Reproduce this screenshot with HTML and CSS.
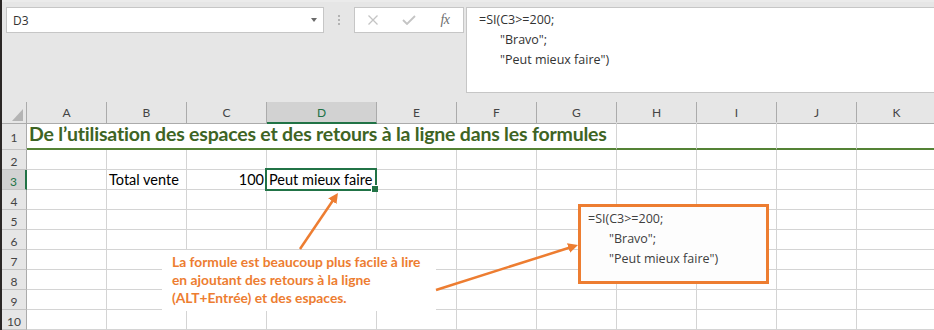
FILE: index.html
```html
<!DOCTYPE html>
<html lang="fr">

<head>
  <meta charset="UTF-8" />
  <meta name="viewport" content="width=device-width, initial-scale=1.0" />
  <title>Espaces et retours à la ligne</title>
  <link rel="stylesheet" href="styles.css">
</head>

<body>
  <div class="app">
    <div class="toolbar">
      <div class="namebox">
        <span>D3</span>
        <span class="caret"></span>
      </div>
      <div class="grip"><i></i><i></i><i></i></div>
      <div class="buttons">
        <span class="btn">
          <svg width="12" height="10" viewBox="0 0 12 10"><path d="M1.5 0.5 L10.5 9.5 M10.5 0.5 L1.5 9.5" stroke="#c4c4c4" stroke-width="1.3" fill="none" /></svg>
        </span>
        <span class="btn">
          <svg width="14" height="10" viewBox="0 0 14 10"><path d="M1 5 L5 9 L13 1" stroke="#c4c4c4" stroke-width="1.8" fill="none" /></svg>
        </span>
        <span class="btn fx">fx</span>
      </div>
      <div class="formula">
        <div>=SI(C3&gt;=200;</div>
        <div class="indent">"Bravo";</div>
        <div class="indent">"Peut mieux faire")</div>
      </div>
    </div>

    <div class="sheet">
      <div class="row head">
        <div class="corner"></div>
        <div class="col">A</div>
        <div class="col">B</div>
        <div class="col">C</div>
        <div class="col sel">D</div>
        <div class="col">E</div>
        <div class="col">F</div>
        <div class="col">G</div>
        <div class="col">H</div>
        <div class="col">I</div>
        <div class="col">J</div>
        <div class="col">K</div>
      </div>
      <div class="row r1">
        <div class="num">1</div>
        <div class="cell title">De l’utilisation des espaces et des retours à la ligne dans les formules</div>
        <div class="cell"></div>
        <div class="cell"></div>
        <div class="cell"></div>
        <div class="cell"></div>
      </div>
      <div class="row">
        <div class="num">2</div>
        <div class="cell"></div><div class="cell"></div><div class="cell"></div><div class="cell"></div>
        <div class="cell"></div><div class="cell"></div><div class="cell"></div><div class="cell"></div>
        <div class="cell"></div><div class="cell"></div><div class="cell"></div>
      </div>
      <div class="row">
        <div class="num sel">3</div>
        <div class="cell"></div>
        <div class="cell">Total vente</div>
        <div class="cell right">100</div>
        <div class="cell active">Peut mieux faire</div>
        <div class="cell"></div><div class="cell"></div><div class="cell"></div><div class="cell"></div>
        <div class="cell"></div><div class="cell"></div><div class="cell"></div>
      </div>
      <div class="row">
        <div class="num">4</div>
        <div class="cell"></div><div class="cell"></div><div class="cell"></div><div class="cell"></div>
        <div class="cell"></div><div class="cell"></div><div class="cell"></div><div class="cell"></div>
        <div class="cell"></div><div class="cell"></div><div class="cell"></div>
      </div>
      <div class="row">
        <div class="num">5</div>
        <div class="cell"></div><div class="cell"></div><div class="cell"></div><div class="cell"></div>
        <div class="cell"></div><div class="cell"></div><div class="cell"></div><div class="cell"></div>
        <div class="cell"></div><div class="cell"></div><div class="cell"></div>
      </div>
      <div class="row">
        <div class="num">6</div>
        <div class="cell"></div><div class="cell"></div><div class="cell"></div><div class="cell"></div>
        <div class="cell"></div><div class="cell"></div><div class="cell"></div><div class="cell"></div>
        <div class="cell"></div><div class="cell"></div><div class="cell"></div>
      </div>
      <div class="row">
        <div class="num">7</div>
        <div class="cell"></div><div class="cell"></div><div class="cell"></div><div class="cell"></div>
        <div class="cell"></div><div class="cell"></div><div class="cell"></div><div class="cell"></div>
        <div class="cell"></div><div class="cell"></div><div class="cell"></div>
      </div>
      <div class="row">
        <div class="num">8</div>
        <div class="cell"></div><div class="cell"></div><div class="cell"></div><div class="cell"></div>
        <div class="cell"></div><div class="cell"></div><div class="cell"></div><div class="cell"></div>
        <div class="cell"></div><div class="cell"></div><div class="cell"></div>
      </div>
      <div class="row">
        <div class="num">9</div>
        <div class="cell"></div><div class="cell"></div><div class="cell"></div><div class="cell"></div>
        <div class="cell"></div><div class="cell"></div><div class="cell"></div><div class="cell"></div>
        <div class="cell"></div><div class="cell"></div><div class="cell"></div>
      </div>
      <div class="row">
        <div class="num">10</div>
        <div class="cell"></div><div class="cell"></div><div class="cell"></div><div class="cell"></div>
        <div class="cell"></div><div class="cell"></div><div class="cell"></div><div class="cell"></div>
        <div class="cell"></div><div class="cell"></div><div class="cell"></div>
      </div>
    </div>

    <!-- annotations over the sheet -->
    <div class="note">
      La formule est beaucoup plus facile à lire<br>
      en ajoutant des retours à la ligne<br>
      (ALT+Entrée) et des espaces.
    </div>
    <div class="callout">
      <div>=SI(C3&gt;=200;</div>
      <div class="indent">"Bravo";</div>
      <div class="indent">"Peut mieux faire")</div>
    </div>
    <svg class="arrows" width="934" height="330" viewBox="0 0 934 330">
      <defs>
        <marker id="head" markerUnits="userSpaceOnUse" markerWidth="11" markerHeight="10" refX="4" refY="5" orient="auto">
          <path d="M0 0 L10 5 L0 10 z" fill="#ed7d31" />
        </marker>
      </defs>
      <line x1="300" y1="249" x2="334.6" y2="198" stroke="#ed7d31" stroke-width="2.5" marker-end="url(#head)" />
      <line x1="436" y1="290" x2="572.3" y2="246.8" stroke="#ed7d31" stroke-width="2.5" marker-end="url(#head)" />
    </svg>
  </div>
</body>

</html>
```

FILE: styles.css
```css
* {
  padding: 0;
  margin: 0;
  box-sizing: border-box;
}

body {
  width: 934px;
  height: 330px;
  overflow: hidden;
  background: #fff;
  font-family: Lato, "Liberation Sans", sans-serif;
}

.app {
  position: relative;
  width: 934px;
  height: 330px;
  overflow: hidden;
  border-left: 2px solid #2b2726;
}

/* formula bar */
.toolbar {
  display: flex;
  align-items: flex-start;
  height: 102px;
  padding: 7px 0 0 4px;
  background: linear-gradient(#ebebeb 0 2px, #e6e6e6 2px);
  font-family: "Open Sans", "Liberation Sans", sans-serif;
  font-size: 12px;
  color: #333;
}

.namebox {
  display: flex;
  align-items: center;
  justify-content: space-between;
  width: 318px;
  height: 26px;
  padding: 0 6px;
  background: #fff;
  border: 1px solid #c6c6c6;
}

.caret {
  width: 0;
  height: 0;
  border-left: 3.5px solid transparent;
  border-right: 3.5px solid transparent;
  border-top: 4px solid #6a6a6a;
}

.grip {
  display: flex;
  flex-direction: column;
  align-items: center;
  justify-content: center;
  gap: 2px;
  width: 30px;
  height: 26px;
}

.grip i {
  width: 2px;
  height: 2px;
  background: #b3b3b3;
}

.buttons {
  display: flex;
  align-items: center;
  width: 110px;
  height: 26px;
  background: #fff;
  border: 1px solid #c6c6c6;
}

.btn {
  display: flex;
  align-items: center;
  justify-content: center;
  width: 36px;
  height: 24px;
}

.btn.fx {
  font-family: "Liberation Serif", serif;
  font-style: italic;
  font-size: 14px;
  color: #6e6e6e;
  letter-spacing: -0.5px;
}

.formula {
  flex: 1;
  height: 86px;
  margin: 0 -20px 0 2px;
  padding: 2px 0 0 12px;
  background: #fff;
  border: 1px solid #c6c6c6;
  font-size: 12.5px;
  line-height: 20px;
  white-space: nowrap;
}

.indent {
  padding-left: 21px;
}

/* grid */
.row {
  display: grid;
  grid-template-columns: 25px 80px 80px 80px 110px repeat(7, 80px);
  height: 20px;
}

.row > div {
  border-right: 1px solid #d4d4d4;
  border-bottom: 1px solid #d4d4d4;
}

.row .col,
.row .corner {
  background: #e6e6e6;
  border-right-color: #ababab;
  border-bottom-color: #ababab;
  text-align: center;
  font-size: 12px;
  line-height: 18px;
  padding-top: 2px;
  color: #444;
}

.corner {
  position: relative;
}

.corner::after {
  content: "";
  position: absolute;
  right: 3px;
  bottom: 2px;
  width: 0;
  height: 0;
  border-left: 11px solid transparent;
  border-bottom: 12px solid #b4b4b4;
}

.row .col.sel {
  background: #d2d2d2;
  border-bottom: 2px solid #217346;
  color: #217346;
}

.row .num {
  display: flex;
  align-items: center;
  justify-content: center;
  padding-top: 3px;
  background: #e6e6e6;
  border-right-color: #ababab;
  border-bottom-color: #c4c4c4;
  font-size: 12px;
  color: #444;
}

.row .num.sel {
  background: #d2d2d2;
  border-right: 2px solid #217346;
  color: #217346;
}

.cell {
  padding: 0 2px;
  font-size: 14.5px;
  line-height: 19px;
  white-space: nowrap;
  color: #000;
}

.cell.right {
  text-align: right;
}

.cell.active {
  position: relative;
}

.cell.active::after {
  content: "";
  position: absolute;
  left: -2px;
  top: -2px;
  right: -1px;
  bottom: -2px;
  border: 2px solid #217346;
}

.cell.active::before {
  content: "";
  position: absolute;
  right: -2px;
  bottom: -3px;
  width: 6px;
  height: 6px;
  background: #217346;
  border-left: 1px solid #fff;
  border-top: 1px solid #fff;
  z-index: 1;
}

.r1 {
  height: 28px;
}

.r1 .cell {
  border-bottom: 2px solid #548235;
}

.r1 .title {
  grid-column: span 7;
  padding-left: 2px;
  font-size: 19.5px;
  font-weight: 700;
  line-height: 24px;
  letter-spacing: -0.2px;
  color: #3e6424;
}

/* annotations */
.note {
  position: absolute;
  left: 160px;
  top: 250px;
  width: 274px;
  height: 61px;
  padding: 3px 0 0 10px;
  background: #fff;
  font-size: 13.8px;
  font-weight: 700;
  line-height: 18px;
  white-space: nowrap;
  color: #ed7d31;
}

.callout {
  position: absolute;
  left: 576px;
  top: 204px;
  width: 191px;
  height: 80px;
  padding: 2px 0 0 7px;
  background: #fdfdfd;
  border: 3px solid #ed7d31;
  font-family: "Open Sans", "Liberation Sans", sans-serif;
  font-size: 12.5px;
  line-height: 20px;
  white-space: nowrap;
  color: #404040;
}

.arrows {
  position: absolute;
  left: -2px;
  top: 0;
  pointer-events: none;
}
```
